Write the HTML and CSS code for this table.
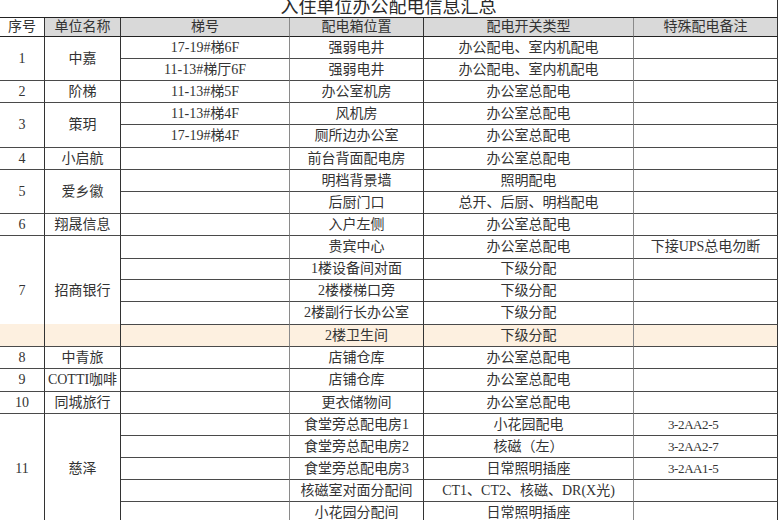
FILE: index.html
```html
<!DOCTYPE html>
<html lang="zh-CN">
<head>
<meta charset="utf-8">
<title>入住单位办公配电信息汇总</title>
<link rel="stylesheet" href="styles.css">
</head>
<body>
<div class="sheet">
  <div class="title">入住单位办公配电信息汇总</div>

  <div class="c hw">序号</div>
  <div class="c h">单位名称</div>
  <div class="c h v">梯号</div>
  <div class="c h">配电箱位置</div>
  <div class="c h v">配电开关类型</div>
  <div class="c h">特殊配电备注</div>

  <div class="c rs2">1</div>
  <div class="c rs2">中嘉</div>
  <div class="c v">17-19#梯6F</div>
  <div class="c">强弱电井</div>
  <div class="c v">办公配电、室内机配电</div>
  <div class="c"></div>

  <div class="c v">11-13#梯厅6F</div>
  <div class="c">强弱电井</div>
  <div class="c v">办公配电、室内机配电</div>
  <div class="c"></div>

  <div class="c">2</div>
  <div class="c">阶梯</div>
  <div class="c v">11-13#梯5F</div>
  <div class="c">办公室机房</div>
  <div class="c v">办公室总配电</div>
  <div class="c"></div>

  <div class="c rs2">3</div>
  <div class="c rs2">策玥</div>
  <div class="c v">11-13#梯4F</div>
  <div class="c">风机房</div>
  <div class="c v">办公室总配电</div>
  <div class="c"></div>

  <div class="c v">17-19#梯4F</div>
  <div class="c">厕所边办公室</div>
  <div class="c v">办公室总配电</div>
  <div class="c"></div>

  <div class="c">4</div>
  <div class="c">小启航</div>
  <div class="c v"></div>
  <div class="c">前台背面配电房</div>
  <div class="c v">办公室总配电</div>
  <div class="c"></div>

  <div class="c rs2">5</div>
  <div class="c rs2">爱乡徽</div>
  <div class="c v"></div>
  <div class="c">明档背景墙</div>
  <div class="c v">照明配电</div>
  <div class="c"></div>

  <div class="c v"></div>
  <div class="c">后厨门口</div>
  <div class="c v">总开、后厨、明档配电</div>
  <div class="c"></div>

  <div class="c">6</div>
  <div class="c">翔晟信息</div>
  <div class="c v"></div>
  <div class="c">入户左侧</div>
  <div class="c v">办公室总配电</div>
  <div class="c"></div>

  <div class="c rs5 hl-end">7</div>
  <div class="c rs5 hl-end">招商银行</div>
  <div class="c v"></div>
  <div class="c">贵宾中心</div>
  <div class="c v">办公室总配电</div>
  <div class="c">下接UPS总电勿断</div>

  <div class="c v"></div>
  <div class="c">1楼设备间对面</div>
  <div class="c v">下级分配</div>
  <div class="c"></div>

  <div class="c v"></div>
  <div class="c">2楼楼梯口旁</div>
  <div class="c v">下级分配</div>
  <div class="c"></div>

  <div class="c v"></div>
  <div class="c">2楼副行长办公室</div>
  <div class="c v">下级分配</div>
  <div class="c"></div>

  <div class="c v hl"></div>
  <div class="c hl">2楼卫生间</div>
  <div class="c v hl">下级分配</div>
  <div class="c hl"></div>

  <div class="c">8</div>
  <div class="c">中青旅</div>
  <div class="c v"></div>
  <div class="c">店铺仓库</div>
  <div class="c v">办公室总配电</div>
  <div class="c"></div>

  <div class="c">9</div>
  <div class="c">COTTI咖啡</div>
  <div class="c v"></div>
  <div class="c">店铺仓库</div>
  <div class="c v">办公室总配电</div>
  <div class="c"></div>

  <div class="c">10</div>
  <div class="c">同城旅行</div>
  <div class="c v"></div>
  <div class="c">更衣储物间</div>
  <div class="c v">办公室总配电</div>
  <div class="c"></div>

  <div class="c rs5">11</div>
  <div class="c rs5">慈泽</div>
  <div class="c v"></div>
  <div class="c">食堂旁总配电房1</div>
  <div class="c v">小花园配电</div>
  <div class="c note">3-2AA2-5</div>

  <div class="c v"></div>
  <div class="c">食堂旁总配电房2</div>
  <div class="c v">核磁（左）</div>
  <div class="c note">3-2AA2-7</div>

  <div class="c v"></div>
  <div class="c">食堂旁总配电房3</div>
  <div class="c v">日常照明插座</div>
  <div class="c note">3-2AA1-5</div>

  <div class="c v"></div>
  <div class="c">核磁室对面分配间</div>
  <div class="c v">CT1、CT2、核磁、DR(X光)</div>
  <div class="c"></div>

  <div class="c v"></div>
  <div class="c">小花园分配间</div>
  <div class="c v">日常照明插座</div>
  <div class="c"></div>
</div>
</body>
</html>
```

FILE: styles.css
```css
html, body {
  margin: 0;
  padding: 0;
  background: #ffffff;
  overflow: hidden;
}

body {
  width: 780px;
  height: 520px;
  font-family: "Liberation Serif", "Noto Sans CJK SC", serif;
  color: #333333;
}

.sheet {
  display: grid;
  grid-template-columns: 45px 76px 169px 134px 210px 144px;
  grid-template-rows: 18px 19px
    22px 22px 22px 22px 23px 22px 22px 22px 22px 23px 21px
    22px 23px 22px 22px 23px 22px 22px 22px 22px 22px 22px;
}

.title {
  grid-column: 1 / -1;
  box-sizing: border-box;
  border-right: 1px solid #333333;
  border-bottom: 1px solid #222222;
  font-size: 18px;
  line-height: 14px;
  text-align: center;
  color: #2a2a2a;
  overflow: visible;
}

.c {
  box-sizing: border-box;
  border-right: 1px solid #333333;
  border-bottom: 1px solid #4a4a4a;
  display: flex;
  align-items: center;
  justify-content: center;
  font-size: 14px;
  line-height: 1;
  white-space: nowrap;
  overflow: hidden;
}

.v {
  border-right-color: #8a8a8a;
}

.h {
  background: #d9d9d9;
  border-bottom-color: #222222;
}

.hw {
  background: #ffffff;
  border-bottom-color: #222222;
}

.rs2 {
  grid-row: span 2;
}

.rs5 {
  grid-row: span 5;
}

.hl {
  background: #fdf0e0;
}

.hl-end {
  background: linear-gradient(to top, #fdf0e0 22px, transparent 22px);
}

.note {
  justify-content: flex-start;
  padding-left: 34px;
  font-size: 13px;
  letter-spacing: -0.4px;
}
```
